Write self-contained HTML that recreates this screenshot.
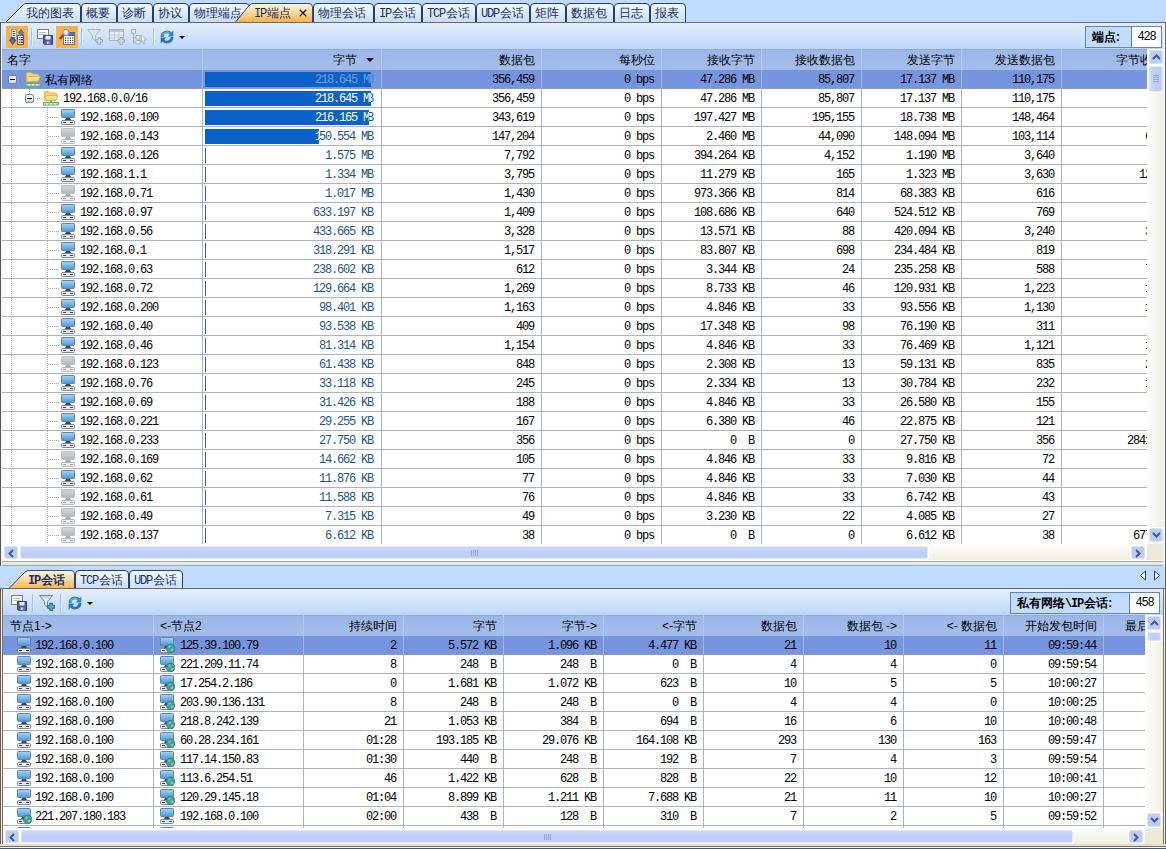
<!DOCTYPE html>
<html lang="zh"><head><meta charset="utf-8"><title>IP端点</title>
<style>
html,body{margin:0;padding:0;background:#bfdbff;}
body{width:1166px;height:849px;overflow:hidden;font-family:"Liberation Sans",sans-serif;font-size:12px;color:#000;}
#app{position:relative;width:1166px;height:849px;overflow:hidden;background:#bfdbff;}
#app div,#app i,#app span,#app svg,#app b{box-sizing:border-box;}
i{font-style:normal;display:block;position:absolute;}
#defs{position:absolute;width:0;height:0;overflow:hidden;}
/* tab bars */
#tabbar{position:absolute;left:0;top:0;width:1166px;height:23px;background:#bfdbff;}
#tabbar2{position:absolute;left:0;top:566px;width:1166px;height:23px;background:#bfdbff;}
.tab{position:absolute;top:3px;height:20px;font-size:12px;color:#14306a;white-space:nowrap;}
.tab .tbg{position:absolute;left:0;top:0;display:block;}
.tab>span{position:absolute;top:3px;line-height:14px;height:14px;letter-spacing:0;}
.tab.b>span{font-weight:bold;}
.tab .tx{right:5px;top:3px;font-size:10px;line-height:14px;color:#111;font-weight:normal;}
#tabbar2 .tab{top:4px;}
.navarr{position:absolute;top:4px;display:block;}
#tabline{position:absolute;left:0;top:22px;width:1166px;height:1px;background:#6a6a6c;}
#tabline2{position:absolute;left:0;top:588px;width:1166px;height:1px;background:#6a6a6c;}
/* toolbars */
.toolbar{position:absolute;left:0;width:1166px;height:26px;background:linear-gradient(#e4eefc 0%,#d3e4fa 45%,#bcd7fb 100%);}
#tb1{top:23px;}
#tb2{top:589px;}
.tbtn{position:absolute;top:3px;width:22px;height:22px;}
.tbtn svg{position:absolute;left:3px;top:3px;display:block;}
.tbtn.on{background:#fbb04f;}
.tsep{position:absolute;top:5px;width:2px;height:18px;border-left:1px solid #adc4e8;border-right:1px solid #e6effc;}
.tdrop{position:absolute;top:13px;width:0;height:0;border-left:3px solid transparent;border-right:3px solid transparent;border-top:3px solid #000;margin-left:1px;}
.counter{position:absolute;top:3px;height:22px;border:1px solid #5f86c4;background:#c2dcff;font-size:12px;line-height:20px;white-space:nowrap;}
.counter b{position:absolute;left:6px;top:0;font-weight:bold;color:#000;}
.counter .cv{position:absolute;right:0;top:0;height:20px;background:#fff;border-left:1px solid #5f86c4;text-align:center;font-family:"Liberation Mono",monospace;letter-spacing:-1.2px;}
/* grids */
.grid{position:absolute;left:0;width:1166px;overflow:hidden;}
#g1{top:49px;height:512px;}
#g2{top:615px;height:230px;width:1163px;}
.ghead{position:absolute;left:0;top:0;width:1166px;height:21px;background:linear-gradient(#9ab6e7,#a5beeb);border-top:1px solid #8fabdc;}
.hc{position:absolute;top:0;height:20px;line-height:20px;font-size:12px;color:#000;white-space:nowrap;overflow:hidden;}
.hc>span{position:absolute;left:7px;top:0;}
.hc.r>span{left:auto;right:6px;}
.hc .sortarr{right:7px;top:8px;width:0;height:0;border-left:4px solid transparent;border-right:4px solid transparent;border-top:4px solid #000;}
.gbody{position:absolute;left:0;top:21px;width:1166px;background:repeating-linear-gradient(to bottom,#fff 0,#fff 18px,#a9b3c2 18px,#a9b3c2 19px);overflow:hidden;}
#g1 .gbody{height:475px;}
#g2 .gbody{height:192px;}
.row{position:absolute;left:0;width:1166px;height:19px;}
.row.sel{background:#7595de;box-shadow:inset 0 -1px 0 #8c9cc0;}
.c{position:absolute;top:0;height:19px;line-height:21px;font-family:"Liberation Mono",monospace;font-size:12px;letter-spacing:-1.2px;white-space:pre;overflow:hidden;}
.c.r{text-align:right;padding-right:7px;}
.c .nm{position:absolute;top:0;line-height:21px;}
.c .nm.cj{font-family:"Liberation Sans",sans-serif;letter-spacing:0;}
.ic{position:absolute;top:1px;display:block;}
.pm{top:5px;width:9px;height:9px;border:1px solid #7c8594;border-radius:2px;background:linear-gradient(#fff,#d4d7dc);}
.pm:after{content:"";position:absolute;left:1px;top:3px;width:5px;height:1px;background:#000;}
.vl{width:1px;background-image:linear-gradient(#a6a6a6 50%,transparent 50%);background-size:1px 2px;}
.hl{top:9px;height:1px;background-image:linear-gradient(90deg,#a6a6a6 50%,transparent 50%);background-size:2px 1px;}
.cb .bt{position:absolute;right:8px;top:0;line-height:21px;color:#1f5585;text-align:right;}
.cb .bar{position:absolute;left:3px;top:2px;height:15px;background:#0a62c9;overflow:hidden;}
.cb .bar.thin{width:1px;background:#2a62a8;}
.cb .bar .bt.w{left:0;right:auto;top:-2px;color:#fff;padding-right:0;}
.row.sel .cb .bt{color:#4d86c8;}
.row.sel .cb .bar .bt.w{color:#6fa0e0;}
.cl{top:0;width:1px;height:496px;background:linear-gradient(#b4c6ea 0,#b4c6ea 21px,#a9b3c4 21px);}
#g2 .cl{height:213px;}
/* scrollbars */
.vsb{position:absolute;background:linear-gradient(90deg,#fdfdfb,#f1efe4);}
.hsb{position:absolute;background:linear-gradient(#fdfdfb,#f1efe4);}
.corner{position:absolute;background:#ece9d8;}
.sbtn{position:absolute;width:14px;height:14px;background:#bccdf0;border:1px solid #d9e4f8;border-radius:2px;box-shadow:0 0 0 1px #fff;}
.vsb .sbtn{left:2px;}
.hsb .sbtn{top:2px;height:13px;}
.sbtn svg{position:absolute;display:block;}
.sbtn.up svg,.sbtn.dn svg{left:2px;top:3px;}
.sbtn.lf svg,.sbtn.rt svg{left:3px;top:2px;}
.vthumb{position:absolute;left:2px;width:14px;background:linear-gradient(90deg,#cad6fa,#bccbf7 60%,#c3d0f9);border:1px solid #dfe8fa;border-radius:2px;box-shadow:0 0 0 1px #fff;}
.vthumb i{left:3px;top:8px;width:6px;height:7px;background-image:linear-gradient(#93aadc 50%,transparent 50%);background-size:6px 2px;}
.hthumb{position:absolute;top:2px;height:13px;background:linear-gradient(#cad6fa,#bccbf7 60%,#c3d0f9);border:1px solid #dfe8fa;border-radius:2px;box-shadow:0 0 0 1px #fff;}
.hthumb i{left:50%;top:3px;width:7px;height:6px;margin-left:-3px;background-image:linear-gradient(90deg,#93aadc 50%,transparent 50%);background-size:2px 6px;}
/* splitter + frames */
#split{position:absolute;left:0;top:560px;width:1166px;height:6px;background:linear-gradient(#fbfbf8 0,#fbfbf8 1px,#a6aeae 1px,#a6aeae 2px,#e9e9dd 2px,#e9e9dd 5px,#96a6ba 5px);}

#frameL1{position:absolute;left:0;top:23px;width:2px;height:543px;background:linear-gradient(90deg,#565a50 0,#565a50 1px,#eef3fb 1px);}
#frameL2{position:absolute;left:0;top:589px;width:3px;height:260px;background:linear-gradient(90deg,#6b5c4c 0,#6b5c4c 1px,#f0ece0 1px,#f0ece0 2px,#7c7066 2px);}
#frameR{position:absolute;left:1163px;top:23px;width:3px;height:543px;background:linear-gradient(90deg,#eef3fb 0,#eef3fb 2px,#6e6660 2px);}
#frameR2{position:absolute;left:1163px;top:589px;width:3px;height:260px;background:linear-gradient(90deg,#7c7670 0,#7c7670 1px,#f0ece0 1px,#f0ece0 2px,#6b5c4c 2px);}
#frameR0{position:absolute;left:1165px;top:566px;width:1px;height:23px;background:#6e6660;}
#frameB{position:absolute;left:0;top:844px;width:1166px;height:5px;background:linear-gradient(#e6dfc4 0,#e6dfc4 2px,#7c6e60 2px,#7c6e60 3px,#f4f4f4 3px,#f4f4f4 4px,#3c5682 4px);}

.m{font-family:"Liberation Mono",monospace;letter-spacing:-1.2px;margin-right:1.2px;}
.hc.sorted>span{right:24px;}
.k{display:inline-block;width:12px;text-align:center;overflow:visible;white-space:nowrap;}
.tab .txs{position:absolute;right:6px;top:6px;display:block;}

</style></head>
<body>
<svg id="defs" width="0" height="0" aria-hidden="true">
<defs>
<linearGradient id="gt" x1="0" y1="0" x2="0" y2="1"><stop offset="0" stop-color="#f4f8fe"/><stop offset="0.5" stop-color="#e0ecfc"/><stop offset="1" stop-color="#c6dcfa"/></linearGradient>
<linearGradient id="ga" x1="0" y1="0" x2="0" y2="1"><stop offset="0" stop-color="#fff3e0"/><stop offset="0.45" stop-color="#ffd9a0"/><stop offset="1" stop-color="#ffb04a"/></linearGradient>
<linearGradient id="gscr" x1="0" y1="0" x2="0" y2="1"><stop offset="0" stop-color="#a6d5f3"/><stop offset="1" stop-color="#4c98dc"/></linearGradient>
<linearGradient id="gscrg" x1="0" y1="0" x2="0" y2="1"><stop offset="0" stop-color="#d4d6d8"/><stop offset="1" stop-color="#b4b7ba"/></linearGradient>
<linearGradient id="gfold" x1="0" y1="0" x2="0" y2="1"><stop offset="0" stop-color="#fff0ae"/><stop offset="1" stop-color="#f8cf5e"/></linearGradient>
<symbol id="i-pc" viewBox="0 0 16 16">
 <rect x="1.5" y="0.5" width="13" height="8" rx="0.8" fill="url(#gscr)" stroke="#5f87ad" stroke-width="1"/>
 <path d="M6 9 H10 L11 11 H5 Z" fill="#3a4a5c"/>
 <rect x="1.5" y="11.5" width="13" height="4" rx="1" fill="#e9ebee" stroke="#7d8793" stroke-width="1"/>
 <rect x="3" y="13" width="3" height="1" fill="#3c4650"/><rect x="10" y="13" width="3" height="1" fill="#3c4650"/>
</symbol>
<symbol id="i-pcg" viewBox="0 0 16 16">
 <rect x="1.5" y="0.5" width="13" height="8" rx="0.8" fill="url(#gscrg)" stroke="#b9bcc0" stroke-width="1"/>
 <path d="M6 9 H10 L11 11 H5 Z" fill="#a7abb0"/>
 <rect x="1.5" y="11.5" width="13" height="4" rx="1" fill="#eeeff1" stroke="#b4b8bd" stroke-width="1"/>
 <rect x="3" y="13" width="3" height="1" fill="#9a9ea4"/><rect x="10" y="13" width="3" height="1" fill="#9a9ea4"/>
</symbol>
<symbol id="i-pcw" viewBox="0 0 16 16">
 <rect x="1.5" y="0.5" width="13" height="8" rx="0.8" fill="url(#gscr)" stroke="#5f87ad" stroke-width="1"/>
 <path d="M6 9 H10 L11 11 H5 Z" fill="#3a4a5c"/>
 <rect x="1.5" y="11.5" width="13" height="4" rx="1" fill="#e9ebee" stroke="#7d8793" stroke-width="1"/>
 <rect x="3" y="13" width="3" height="1" fill="#3c4650"/>
 <circle cx="11.6" cy="11.4" r="4.1" fill="#3f9fa6" stroke="#2b7a80" stroke-width="0.8"/>
 <path d="M8.8 10 Q10.4 8.2 12.4 8.6 Q11.8 10.6 10 11.2 Z M11.6 11.8 Q13.6 11 15 12.4 Q14 14.8 12 14.6 Z" fill="#74c88a"/>
</symbol>
<symbol id="i-net" viewBox="0 0 16 16">
 <path d="M1.5 3 Q1.5 1.5 3 1.5 H6 L7.5 3 H12.5 Q13.5 3 13.5 4 V9.5 H1.5 Z" fill="#f6d272" stroke="#e0b24c" stroke-width="1"/>
 <path d="M3.5 5.5 H15 L12.8 10.5 H1.5 Z" fill="url(#gfold)" stroke="#e6b84e" stroke-width="1"/>
 <rect x="7" y="10.5" width="2" height="2.5" fill="#7fa878"/>
 <rect x="0.5" y="12.5" width="15" height="2.6" fill="#a4dca0" stroke="#62b064" stroke-width="0.9"/>
 <rect x="3" y="13.2" width="2" height="1.3" fill="#eef8ec"/><rect x="7" y="13.2" width="2" height="1.3" fill="#eef8ec"/><rect x="11" y="13.2" width="2" height="1.3" fill="#eef8ec"/>
</symbol>
<symbol id="i-save" viewBox="0 0 16 16">
 <rect x="0.5" y="0.5" width="11" height="9" fill="#fdfdfd" stroke="#7a8088" stroke-width="1"/>
 <rect x="2" y="3" width="7" height="1" fill="#b9bdc3"/><rect x="2" y="5" width="7" height="1" fill="#b9bdc3"/>
 <path d="M6.5 6.5 H15.5 V15.5 H7.5 L6.5 14.5 Z" fill="#4c58a6" stroke="#3a4488" stroke-width="1"/>
 <rect x="8.5" y="7" width="5" height="3.5" fill="#eef0f8"/>
 <rect x="9" y="12" width="4.5" height="3.5" fill="#7c86c6"/><rect x="10" y="12.8" width="1.4" height="2" fill="#f0f0f8"/>
</symbol>
<symbol id="i-sync" viewBox="0 0 16 16">
 <rect x="2.5" y="0.5" width="5" height="10" fill="#fdfdfd" stroke="#9aa1a8" stroke-width="1"/>
 <rect x="3.5" y="2" width="3" height="1" fill="#46734a"/><rect x="3.5" y="4" width="3" height="1" fill="#46734a"/><rect x="3.5" y="6" width="3" height="1" fill="#46734a"/><rect x="3.5" y="8" width="3" height="1" fill="#46734a"/>
 <path d="M2 8 L2 11 L0.5 11 L3.7 15.5 L7 11 L5.5 11 L5.5 9.5 Z" fill="#4c6fc0" stroke="#263f80" stroke-width="0.7"/>
 <path d="M9.5 4.5 L12 0.5 L14.5 4 L13.6 4.2 Q15.3 6.5 14.4 9 L12.6 8.4 Q13 6.4 11.6 4.6 Z" fill="#5a86d0" stroke="#2c4f98" stroke-width="0.7"/>
 <rect x="8.5" y="6.5" width="6" height="9" fill="#fdfdfd" stroke="#6a5a48" stroke-width="1"/>
 <rect x="9.8" y="8" width="1" height="1" fill="#222"/><rect x="11.6" y="8" width="2.2" height="1" fill="#222"/>
 <rect x="9.8" y="10" width="1" height="1.4" fill="#222"/><rect x="11.6" y="10" width="2.2" height="1.4" fill="#222"/>
 <rect x="9.8" y="12.5" width="1" height="1.4" fill="#222"/><rect x="11.6" y="12.5" width="2.2" height="1.4" fill="#222"/>
</symbol>
<symbol id="i-find" viewBox="0 0 16 16">
 <rect x="4.5" y="6.5" width="11" height="9" fill="#fdfdfd" stroke="#6f7680" stroke-width="1"/>
 <rect x="9" y="3.5" width="6.5" height="3" fill="#5673c6" stroke="#4a62ae" stroke-width="1"/>
 <g fill="#30343c"><rect x="6" y="8.5" width="1.2" height="1.2"/><rect x="8.4" y="8.5" width="1.2" height="1.2"/><rect x="10.8" y="8.5" width="1.2" height="1.2"/><rect x="13.2" y="8.5" width="1.2" height="1.2"/>
 <rect x="6" y="10.8" width="1.2" height="1.2"/><rect x="8.4" y="10.8" width="1.2" height="1.2"/><rect x="10.8" y="10.8" width="1.2" height="1.2"/><rect x="13.2" y="10.8" width="1.2" height="1.2"/>
 <rect x="6" y="13.1" width="1.2" height="1.2"/><rect x="8.4" y="13.1" width="1.2" height="1.2"/><rect x="10.8" y="13.1" width="1.2" height="1.2"/><rect x="13.2" y="13.1" width="1.2" height="1.2"/></g>
 <path d="M1.4 9.2 L4.8 5.8" stroke="#7a5230" stroke-width="2.4" stroke-linecap="round"/>
 <circle cx="7" cy="3.4" r="3" fill="#dce9f5" stroke="#8e99a8" stroke-width="1.1"/>
 <path d="M5.2 2.6 A2 2 0 0 1 7.6 1.4" stroke="#fff" stroke-width="0.8" fill="none"/>
</symbol>
<symbol id="i-filter" viewBox="0 0 16 16">
 <path d="M0.5 0.5 H13.5 L8.5 6.5 V12 L5.5 9.5 V6.5 Z" fill="#e4eef8" stroke="#5a86bc" stroke-width="1"/>
 <path d="M2 1.2 H12 L10.6 2.8 H3.4 Z" fill="#b9d2ec"/>
 <path d="M8.6 10.4 H10.8 V8.2 H13.6 V10.4 H15.8 V13.2 H13.6 V15.6 H10.8 V13.2 H8.6 Z" fill="#4fb0c4" stroke="#1c5f78" stroke-width="0.9"/>
</symbol>
<symbol id="i-filter-g" viewBox="0 0 16 16">
 <path d="M0.5 0.5 H13.5 L8.5 6.5 V12 L5.5 9.5 V6.5 Z" fill="#dde4ee" stroke="#a9b5c6" stroke-width="1"/>
 <path d="M9 10.5 H11 V8.5 H13.5 V10.5 H15.5 V13 H13.5 V15.5 H11 V13 H9 Z" fill="#cfd7e2" stroke="#9eabbd" stroke-width="0.9"/>
</symbol>
<symbol id="i-table-g" viewBox="0 0 16 16">
 <rect x="0.5" y="0.5" width="14" height="11" fill="#e9eef6" stroke="#a6b2c4" stroke-width="1"/>
 <rect x="1" y="1" width="13" height="2" fill="#b7c2d3"/>
 <path d="M1 6 H14 M1 9 H14 M5.5 3 V11 M10 3 V11" stroke="#c0cad9" stroke-width="1" fill="none"/>
 <path d="M9 10.5 H11 V8.5 H13.5 V10.5 H15.5 V13 H13.5 V15.5 H11 V13 H9 Z" fill="#cfd7e2" stroke="#9eabbd" stroke-width="0.9"/>
</symbol>
<symbol id="i-tree-g" viewBox="0 0 16 16">
 <rect x="0.5" y="0.5" width="4" height="3.5" fill="#eef2f8" stroke="#a6b2c4" stroke-width="1"/>
 <path d="M2.5 4 V13.5 H5 M2.5 8.5 H5" stroke="#a6b2c4" stroke-width="1" fill="none"/>
 <rect x="5" y="6.5" width="4" height="3.5" fill="#eef2f8" stroke="#a6b2c4" stroke-width="1"/>
 <rect x="5" y="11.5" width="4" height="3.5" fill="#eef2f8" stroke="#a6b2c4" stroke-width="1"/>
 <path d="M10.5 6 L15.5 11 H13 L14 14.5 L12.8 15 L11.8 11.8 L10.5 13 Z" fill="#eef2f8" stroke="#a6b2c4" stroke-width="0.9"/>
</symbol>
<symbol id="i-refresh" viewBox="0 0 16 16">
 <path d="M3 8 A5 5 0 0 1 11.8 4.7" fill="none" stroke="#2c86c8" stroke-width="2.8"/>
 <path d="M14.3 1.6 V7.6 H8.6 Z" fill="#2c86c8"/>
 <path d="M13 8 A5 5 0 0 1 4.2 11.3" fill="none" stroke="#2577b8" stroke-width="2.8"/>
 <path d="M1.7 14.4 V8.4 H7.4 Z" fill="#2577b8"/>
 <path d="M3.6 6.6 A4.6 4.6 0 0 1 10.6 3.9" fill="none" stroke="#7cc4ee" stroke-width="0.9"/>
</symbol>
</defs>
</svg>
<div id="app">
<div id="tabbar">
<div class="tab tfirst" style="left:5px;width:76px"><svg class="tbg" width="76" height="20" viewBox="0 0 76 20"><path d="M0.5 19.5 L18.5 1.5 Q19.5 0.5 21 0.5 H72 Q75.5 0.5 75.5 4 V19.5" fill="url(#gt)" stroke="#1e3f85" stroke-width="1"/></svg><span style="left:21px"><span class="k">我</span><span class="k">的</span><span class="k">图</span><span class="k">表</span></span></div>
<div class="tab" style="left:81px;width:36px"><svg class="tbg" width="36" height="20" viewBox="0 0 36 20"><path d="M0.5 19.5 V4 Q0.5 0.5 4 0.5 H32 Q35.5 0.5 35.5 4 V19.5" fill="url(#gt)" stroke="#1e3f85" stroke-width="1"/></svg><span style="left:5px"><span class="k">概</span><span class="k">要</span></span></div>
<div class="tab" style="left:117px;width:36px"><svg class="tbg" width="36" height="20" viewBox="0 0 36 20"><path d="M0.5 19.5 V4 Q0.5 0.5 4 0.5 H32 Q35.5 0.5 35.5 4 V19.5" fill="url(#gt)" stroke="#1e3f85" stroke-width="1"/></svg><span style="left:5px"><span class="k">诊</span><span class="k">断</span></span></div>
<div class="tab" style="left:153px;width:36px"><svg class="tbg" width="36" height="20" viewBox="0 0 36 20"><path d="M0.5 19.5 V4 Q0.5 0.5 4 0.5 H32 Q35.5 0.5 35.5 4 V19.5" fill="url(#gt)" stroke="#1e3f85" stroke-width="1"/></svg><span style="left:5px"><span class="k">协</span><span class="k">议</span></span></div>
<div class="tab" style="left:189px;width:61px"><svg class="tbg" width="61" height="20" viewBox="0 0 61 20"><path d="M0.5 19.5 V4 Q0.5 0.5 4 0.5 H57 Q60.5 0.5 60.5 4 V19.5" fill="url(#gt)" stroke="#1e3f85" stroke-width="1"/></svg><span style="left:5px"><span class="k">物</span><span class="k">理</span><span class="k">端</span><span class="k">点</span></span></div>
<div class="tab tactive" style="left:235px;width:78px"><svg class="tbg" width="78" height="20" viewBox="0 0 78 20"><path d="M0 19.5 L14.5 2 Q16 0.5 18 0.5 H74 Q77.5 0.5 77.5 4 V19.5 Z" fill="url(#ga)" stroke="none"/><path d="M0.5 19 L14.5 2 Q16 0.5 18 0.5 H74 Q77.5 0.5 77.5 4 V19.5" fill="none" stroke="#2a4a8c" stroke-width="1"/></svg><span style="left:19px"><span class=m>IP</span><span class="k">端</span><span class="k">点</span></span><svg class="txs" width="8" height="8" viewBox="0 0 8 8"><path d="M0.8 0.8 L7.2 7.2 M7.2 0.8 L0.8 7.2" stroke="#1a1a1a" stroke-width="1.3" fill="none"/></svg></div>
<div class="tab" style="left:313px;width:61px"><svg class="tbg" width="61" height="20" viewBox="0 0 61 20"><path d="M0.5 19.5 V4 Q0.5 0.5 4 0.5 H57 Q60.5 0.5 60.5 4 V19.5" fill="url(#gt)" stroke="#1e3f85" stroke-width="1"/></svg><span style="left:5px"><span class="k">物</span><span class="k">理</span><span class="k">会</span><span class="k">话</span></span></div>
<div class="tab" style="left:374px;width:48px"><svg class="tbg" width="48" height="20" viewBox="0 0 48 20"><path d="M0.5 19.5 V4 Q0.5 0.5 4 0.5 H44 Q47.5 0.5 47.5 4 V19.5" fill="url(#gt)" stroke="#1e3f85" stroke-width="1"/></svg><span style="left:5px"><span class=m>IP</span><span class="k">会</span><span class="k">话</span></span></div>
<div class="tab" style="left:422px;width:54px"><svg class="tbg" width="54" height="20" viewBox="0 0 54 20"><path d="M0.5 19.5 V4 Q0.5 0.5 4 0.5 H50 Q53.5 0.5 53.5 4 V19.5" fill="url(#gt)" stroke="#1e3f85" stroke-width="1"/></svg><span style="left:5px"><span class=m>TCP</span><span class="k">会</span><span class="k">话</span></span></div>
<div class="tab" style="left:476px;width:54px"><svg class="tbg" width="54" height="20" viewBox="0 0 54 20"><path d="M0.5 19.5 V4 Q0.5 0.5 4 0.5 H50 Q53.5 0.5 53.5 4 V19.5" fill="url(#gt)" stroke="#1e3f85" stroke-width="1"/></svg><span style="left:5px"><span class=m>UDP</span><span class="k">会</span><span class="k">话</span></span></div>
<div class="tab" style="left:530px;width:36px"><svg class="tbg" width="36" height="20" viewBox="0 0 36 20"><path d="M0.5 19.5 V4 Q0.5 0.5 4 0.5 H32 Q35.5 0.5 35.5 4 V19.5" fill="url(#gt)" stroke="#1e3f85" stroke-width="1"/></svg><span style="left:5px"><span class="k">矩</span><span class="k">阵</span></span></div>
<div class="tab" style="left:566px;width:48px"><svg class="tbg" width="48" height="20" viewBox="0 0 48 20"><path d="M0.5 19.5 V4 Q0.5 0.5 4 0.5 H44 Q47.5 0.5 47.5 4 V19.5" fill="url(#gt)" stroke="#1e3f85" stroke-width="1"/></svg><span style="left:5px"><span class="k">数</span><span class="k">据</span><span class="k">包</span></span></div>
<div class="tab" style="left:614px;width:36px"><svg class="tbg" width="36" height="20" viewBox="0 0 36 20"><path d="M0.5 19.5 V4 Q0.5 0.5 4 0.5 H32 Q35.5 0.5 35.5 4 V19.5" fill="url(#gt)" stroke="#1e3f85" stroke-width="1"/></svg><span style="left:5px"><span class="k">日</span><span class="k">志</span></span></div>
<div class="tab" style="left:650px;width:36px"><svg class="tbg" width="36" height="20" viewBox="0 0 36 20"><path d="M0.5 19.5 V4 Q0.5 0.5 4 0.5 H32 Q35.5 0.5 35.5 4 V19.5" fill="url(#gt)" stroke="#1e3f85" stroke-width="1"/></svg><span style="left:5px"><span class="k">报</span><span class="k">表</span></span></div>
</div>
<div id="tabline"></div>
<div id="tb1" class="toolbar">
<div class="tbtn on" style="left:6px"><svg width="16" height="16" viewBox="0 0 16 16"><use href="#i-sync"/></svg></div>
<div class="tsep" style="left:31px"></div>
<div class="tbtn" style="left:34px"><svg width="16" height="16" viewBox="0 0 16 16"><use href="#i-save"/></svg></div>
<div class="tbtn on" style="left:56px"><svg width="16" height="16" viewBox="0 0 16 16"><use href="#i-find"/></svg></div>
<div class="tsep" style="left:81px"></div>
<div class="tbtn dis" style="left:84px"><svg width="16" height="16" viewBox="0 0 16 16"><use href="#i-filter-g"/></svg></div>
<div class="tbtn dis" style="left:106px"><svg width="16" height="16" viewBox="0 0 16 16"><use href="#i-table-g"/></svg></div>
<div class="tbtn dis" style="left:128px"><svg width="16" height="16" viewBox="0 0 16 16"><use href="#i-tree-g"/></svg></div>
<div class="tsep" style="left:153px"></div>
<div class="tbtn" style="left:156px"><svg width="16" height="16" viewBox="0 0 16 16"><use href="#i-refresh"/></svg></div>
<div class="tdrop" style="left:178px"></div>
<div class="counter" style="left:1085px;width:77px"><b><span class="k">端</span><span class="k">点</span>:</b><span class="cv" style="width:30px">428</span></div>
</div>
<div id="g1" class="grid">
<div class="ghead">
<div class="hc" style="left:0px;width:202px"><span><span class="k">名</span><span class="k">字</span></span></div>
<div class="hc r sorted" style="left:202px;width:179px"><span><span class="k">字</span><span class="k">节</span></span><i class="sortarr"></i></div>
<div class="hc r" style="left:381px;width:160px"><span><span class="k">数</span><span class="k">据</span><span class="k">包</span></span></div>
<div class="hc r" style="left:541px;width:120px"><span><span class="k">每</span><span class="k">秒</span><span class="k">位</span></span></div>
<div class="hc r" style="left:661px;width:100px"><span><span class="k">接</span><span class="k">收</span><span class="k">字</span><span class="k">节</span></span></div>
<div class="hc r" style="left:761px;width:100px"><span><span class="k">接</span><span class="k">收</span><span class="k">数</span><span class="k">据</span><span class="k">包</span></span></div>
<div class="hc r" style="left:861px;width:100px"><span><span class="k">发</span><span class="k">送</span><span class="k">字</span><span class="k">节</span></span></div>
<div class="hc r" style="left:961px;width:100px"><span><span class="k">发</span><span class="k">送</span><span class="k">数</span><span class="k">据</span><span class="k">包</span></span></div>
<div class="hc" style="left:1061px;width:100px"><span style="left:55px"><span class="k">字</span><span class="k">节</span><span class="k">收</span><span class="k">发</span></span></div>
</div>
<div class="gbody">
<div class="row sel" style="top:0px"><div class="c c0" style="left:0;width:202px"><i class="pm" style="left:8px"></i><svg class="ic" style="left:25px" width="16" height="16" viewBox="0 0 16 16"><use href="#i-net"/></svg><span class="nm cj" style="left:45px"><span class="k">私</span><span class="k">有</span><span class="k">网</span><span class="k">络</span></span></div><div class="c cb" style="left:202px;width:179px"><span class="bt">218.645 MB</span><div class="bar" style="width:166px"><span class="bt w" style="width:170px">218.645 MB</span></div></div><div class="c r" style="left:381px;width:160px">356,459</div><div class="c r" style="left:541px;width:120px">0 bps</div><div class="c r" style="left:661px;width:100px">47.286 MB</div><div class="c r" style="left:761px;width:100px">85,807</div><div class="c r" style="left:861px;width:100px">17.137 MB</div><div class="c r" style="left:961px;width:100px">110,175</div></div>
<div class="row" style="top:19px"><div class="c c0" style="left:0;width:202px"><i class="vl" style="left:11px;top:0;height:19px"></i><i class="hl" style="left:35px;width:8px"></i><i class="vl" style="left:29px;top:0;height:5px"></i><i class="pm" style="left:25px"></i><svg class="ic" style="left:43px" width="16" height="16" viewBox="0 0 16 16"><use href="#i-net"/></svg><span class="nm" style="left:63px">192.168.0.0/16</span></div><div class="c cb" style="left:202px;width:179px"><span class="bt">218.645 MB</span><div class="bar" style="width:166px"><span class="bt w" style="width:170px">218.645 MB</span></div></div><div class="c r" style="left:381px;width:160px">356,459</div><div class="c r" style="left:541px;width:120px">0 bps</div><div class="c r" style="left:661px;width:100px">47.286 MB</div><div class="c r" style="left:761px;width:100px">85,807</div><div class="c r" style="left:861px;width:100px">17.137 MB</div><div class="c r" style="left:961px;width:100px">110,175</div></div>
<div class="row" style="top:38px"><div class="c c0" style="left:0;width:202px"><i class="vl" style="left:11px;top:0;height:19px"></i><i class="vl" style="left:47px;top:0;height:19px"></i><i class="hl" style="left:48px;width:12px"></i><svg class="ic" style="left:60px" width="16" height="16" viewBox="0 0 16 16"><use href="#i-pc"/></svg><span class="nm" style="left:80px">192.168.0.100</span></div><div class="c cb" style="left:202px;width:179px"><span class="bt">216.165 MB</span><div class="bar" style="width:164px"><span class="bt w" style="width:170px">216.165 MB</span></div></div><div class="c r" style="left:381px;width:160px">343,619</div><div class="c r" style="left:541px;width:120px">0 bps</div><div class="c r" style="left:661px;width:100px">197.427 MB</div><div class="c r" style="left:761px;width:100px">195,155</div><div class="c r" style="left:861px;width:100px">18.738 MB</div><div class="c r" style="left:961px;width:100px">148,464</div></div>
<div class="row" style="top:57px"><div class="c c0" style="left:0;width:202px"><i class="vl" style="left:11px;top:0;height:19px"></i><i class="vl" style="left:47px;top:0;height:19px"></i><i class="hl" style="left:48px;width:12px"></i><svg class="ic" style="left:60px" width="16" height="16" viewBox="0 0 16 16"><use href="#i-pcg"/></svg><span class="nm" style="left:80px">192.168.0.143</span></div><div class="c cb" style="left:202px;width:179px"><span class="bt">150.554 MB</span><div class="bar" style="width:114px"><span class="bt w" style="width:170px">150.554 MB</span></div></div><div class="c r" style="left:381px;width:160px">147,204</div><div class="c r" style="left:541px;width:120px">0 bps</div><div class="c r" style="left:661px;width:100px">2.460 MB</div><div class="c r" style="left:761px;width:100px">44,090</div><div class="c r" style="left:861px;width:100px">148.094 MB</div><div class="c r" style="left:961px;width:100px">103,114</div><div class="c" style="left:1062px;width:100px"><span class="nm" style="left:83px">60.1</span></div></div>
<div class="row" style="top:76px"><div class="c c0" style="left:0;width:202px"><i class="vl" style="left:11px;top:0;height:19px"></i><i class="vl" style="left:47px;top:0;height:19px"></i><i class="hl" style="left:48px;width:12px"></i><svg class="ic" style="left:60px" width="16" height="16" viewBox="0 0 16 16"><use href="#i-pc"/></svg><span class="nm" style="left:80px">192.168.0.126</span></div><div class="c cb" style="left:202px;width:179px"><span class="bt">1.575 MB</span><div class="bar thin"></div></div><div class="c r" style="left:381px;width:160px">7,792</div><div class="c r" style="left:541px;width:120px">0 bps</div><div class="c r" style="left:661px;width:100px">394.264 KB</div><div class="c r" style="left:761px;width:100px">4,152</div><div class="c r" style="left:861px;width:100px">1.190 MB</div><div class="c r" style="left:961px;width:100px">3,640</div></div>
<div class="row" style="top:95px"><div class="c c0" style="left:0;width:202px"><i class="vl" style="left:11px;top:0;height:19px"></i><i class="vl" style="left:47px;top:0;height:19px"></i><i class="hl" style="left:48px;width:12px"></i><svg class="ic" style="left:60px" width="16" height="16" viewBox="0 0 16 16"><use href="#i-pc"/></svg><span class="nm" style="left:80px">192.168.1.1</span></div><div class="c cb" style="left:202px;width:179px"><span class="bt">1.334 MB</span><div class="bar thin"></div></div><div class="c r" style="left:381px;width:160px">3,795</div><div class="c r" style="left:541px;width:120px">0 bps</div><div class="c r" style="left:661px;width:100px">11.279 KB</div><div class="c r" style="left:761px;width:100px">165</div><div class="c r" style="left:861px;width:100px">1.323 MB</div><div class="c r" style="left:961px;width:100px">3,630</div><div class="c" style="left:1062px;width:100px"><span class="nm" style="left:77px">12.5</span></div></div>
<div class="row" style="top:114px"><div class="c c0" style="left:0;width:202px"><i class="vl" style="left:11px;top:0;height:19px"></i><i class="vl" style="left:47px;top:0;height:19px"></i><i class="hl" style="left:48px;width:12px"></i><svg class="ic" style="left:60px" width="16" height="16" viewBox="0 0 16 16"><use href="#i-pcg"/></svg><span class="nm" style="left:80px">192.168.0.71</span></div><div class="c cb" style="left:202px;width:179px"><span class="bt">1.017 MB</span><div class="bar thin"></div></div><div class="c r" style="left:381px;width:160px">1,430</div><div class="c r" style="left:541px;width:120px">0 bps</div><div class="c r" style="left:661px;width:100px">973.366 KB</div><div class="c r" style="left:761px;width:100px">814</div><div class="c r" style="left:861px;width:100px">68.383 KB</div><div class="c r" style="left:961px;width:100px">616</div></div>
<div class="row" style="top:133px"><div class="c c0" style="left:0;width:202px"><i class="vl" style="left:11px;top:0;height:19px"></i><i class="vl" style="left:47px;top:0;height:19px"></i><i class="hl" style="left:48px;width:12px"></i><svg class="ic" style="left:60px" width="16" height="16" viewBox="0 0 16 16"><use href="#i-pc"/></svg><span class="nm" style="left:80px">192.168.0.97</span></div><div class="c cb" style="left:202px;width:179px"><span class="bt">633.197 KB</span><div class="bar thin"></div></div><div class="c r" style="left:381px;width:160px">1,409</div><div class="c r" style="left:541px;width:120px">0 bps</div><div class="c r" style="left:661px;width:100px">108.686 KB</div><div class="c r" style="left:761px;width:100px">640</div><div class="c r" style="left:861px;width:100px">524.512 KB</div><div class="c r" style="left:961px;width:100px">769</div></div>
<div class="row" style="top:152px"><div class="c c0" style="left:0;width:202px"><i class="vl" style="left:11px;top:0;height:19px"></i><i class="vl" style="left:47px;top:0;height:19px"></i><i class="hl" style="left:48px;width:12px"></i><svg class="ic" style="left:60px" width="16" height="16" viewBox="0 0 16 16"><use href="#i-pc"/></svg><span class="nm" style="left:80px">192.168.0.56</span></div><div class="c cb" style="left:202px;width:179px"><span class="bt">433.665 KB</span><div class="bar thin"></div></div><div class="c r" style="left:381px;width:160px">3,328</div><div class="c r" style="left:541px;width:120px">0 bps</div><div class="c r" style="left:661px;width:100px">13.571 KB</div><div class="c r" style="left:761px;width:100px">88</div><div class="c r" style="left:861px;width:100px">420.094 KB</div><div class="c r" style="left:961px;width:100px">3,240</div><div class="c" style="left:1062px;width:100px"><span class="nm" style="left:83px">36.8</span></div></div>
<div class="row" style="top:171px"><div class="c c0" style="left:0;width:202px"><i class="vl" style="left:11px;top:0;height:19px"></i><i class="vl" style="left:47px;top:0;height:19px"></i><i class="hl" style="left:48px;width:12px"></i><svg class="ic" style="left:60px" width="16" height="16" viewBox="0 0 16 16"><use href="#i-pc"/></svg><span class="nm" style="left:80px">192.168.0.1</span></div><div class="c cb" style="left:202px;width:179px"><span class="bt">318.291 KB</span><div class="bar thin"></div></div><div class="c r" style="left:381px;width:160px">1,517</div><div class="c r" style="left:541px;width:120px">0 bps</div><div class="c r" style="left:661px;width:100px">83.807 KB</div><div class="c r" style="left:761px;width:100px">698</div><div class="c r" style="left:861px;width:100px">234.484 KB</div><div class="c r" style="left:961px;width:100px">819</div></div>
<div class="row" style="top:190px"><div class="c c0" style="left:0;width:202px"><i class="vl" style="left:11px;top:0;height:19px"></i><i class="vl" style="left:47px;top:0;height:19px"></i><i class="hl" style="left:48px;width:12px"></i><svg class="ic" style="left:60px" width="16" height="16" viewBox="0 0 16 16"><use href="#i-pc"/></svg><span class="nm" style="left:80px">192.168.0.63</span></div><div class="c cb" style="left:202px;width:179px"><span class="bt">238.602 KB</span><div class="bar thin"></div></div><div class="c r" style="left:381px;width:160px">612</div><div class="c r" style="left:541px;width:120px">0 bps</div><div class="c r" style="left:661px;width:100px">3.344 KB</div><div class="c r" style="left:761px;width:100px">24</div><div class="c r" style="left:861px;width:100px">235.258 KB</div><div class="c r" style="left:961px;width:100px">588</div><div class="c" style="left:1062px;width:100px"><span class="nm" style="left:83px">70.3</span></div></div>
<div class="row" style="top:209px"><div class="c c0" style="left:0;width:202px"><i class="vl" style="left:11px;top:0;height:19px"></i><i class="vl" style="left:47px;top:0;height:19px"></i><i class="hl" style="left:48px;width:12px"></i><svg class="ic" style="left:60px" width="16" height="16" viewBox="0 0 16 16"><use href="#i-pc"/></svg><span class="nm" style="left:80px">192.168.0.72</span></div><div class="c cb" style="left:202px;width:179px"><span class="bt">129.664 KB</span><div class="bar thin"></div></div><div class="c r" style="left:381px;width:160px">1,269</div><div class="c r" style="left:541px;width:120px">0 bps</div><div class="c r" style="left:661px;width:100px">8.733 KB</div><div class="c r" style="left:761px;width:100px">46</div><div class="c r" style="left:861px;width:100px">120.931 KB</div><div class="c r" style="left:961px;width:100px">1,223</div><div class="c" style="left:1062px;width:100px"><span class="nm" style="left:83px">13.8</span></div></div>
<div class="row" style="top:228px"><div class="c c0" style="left:0;width:202px"><i class="vl" style="left:11px;top:0;height:19px"></i><i class="vl" style="left:47px;top:0;height:19px"></i><i class="hl" style="left:48px;width:12px"></i><svg class="ic" style="left:60px" width="16" height="16" viewBox="0 0 16 16"><use href="#i-pc"/></svg><span class="nm" style="left:80px">192.168.0.200</span></div><div class="c cb" style="left:202px;width:179px"><span class="bt">98.401 KB</span><div class="bar thin"></div></div><div class="c r" style="left:381px;width:160px">1,163</div><div class="c r" style="left:541px;width:120px">0 bps</div><div class="c r" style="left:661px;width:100px">4.846 KB</div><div class="c r" style="left:761px;width:100px">33</div><div class="c r" style="left:861px;width:100px">93.556 KB</div><div class="c r" style="left:961px;width:100px">1,130</div><div class="c" style="left:1062px;width:100px"><span class="nm" style="left:83px">19.3</span></div></div>
<div class="row" style="top:247px"><div class="c c0" style="left:0;width:202px"><i class="vl" style="left:11px;top:0;height:19px"></i><i class="vl" style="left:47px;top:0;height:19px"></i><i class="hl" style="left:48px;width:12px"></i><svg class="ic" style="left:60px" width="16" height="16" viewBox="0 0 16 16"><use href="#i-pc"/></svg><span class="nm" style="left:80px">192.168.0.40</span></div><div class="c cb" style="left:202px;width:179px"><span class="bt">93.538 KB</span><div class="bar thin"></div></div><div class="c r" style="left:381px;width:160px">409</div><div class="c r" style="left:541px;width:120px">0 bps</div><div class="c r" style="left:661px;width:100px">17.348 KB</div><div class="c r" style="left:761px;width:100px">98</div><div class="c r" style="left:861px;width:100px">76.190 KB</div><div class="c r" style="left:961px;width:100px">311</div></div>
<div class="row" style="top:266px"><div class="c c0" style="left:0;width:202px"><i class="vl" style="left:11px;top:0;height:19px"></i><i class="vl" style="left:47px;top:0;height:19px"></i><i class="hl" style="left:48px;width:12px"></i><svg class="ic" style="left:60px" width="16" height="16" viewBox="0 0 16 16"><use href="#i-pc"/></svg><span class="nm" style="left:80px">192.168.0.46</span></div><div class="c cb" style="left:202px;width:179px"><span class="bt">81.314 KB</span><div class="bar thin"></div></div><div class="c r" style="left:381px;width:160px">1,154</div><div class="c r" style="left:541px;width:120px">0 bps</div><div class="c r" style="left:661px;width:100px">4.846 KB</div><div class="c r" style="left:761px;width:100px">33</div><div class="c r" style="left:861px;width:100px">76.469 KB</div><div class="c r" style="left:961px;width:100px">1,121</div><div class="c" style="left:1062px;width:100px"><span class="nm" style="left:83px">15.7</span></div></div>
<div class="row" style="top:285px"><div class="c c0" style="left:0;width:202px"><i class="vl" style="left:11px;top:0;height:19px"></i><i class="vl" style="left:47px;top:0;height:19px"></i><i class="hl" style="left:48px;width:12px"></i><svg class="ic" style="left:60px" width="16" height="16" viewBox="0 0 16 16"><use href="#i-pcg"/></svg><span class="nm" style="left:80px">192.168.0.123</span></div><div class="c cb" style="left:202px;width:179px"><span class="bt">61.438 KB</span><div class="bar thin"></div></div><div class="c r" style="left:381px;width:160px">848</div><div class="c r" style="left:541px;width:120px">0 bps</div><div class="c r" style="left:661px;width:100px">2.308 KB</div><div class="c r" style="left:761px;width:100px">13</div><div class="c r" style="left:861px;width:100px">59.131 KB</div><div class="c r" style="left:961px;width:100px">835</div><div class="c" style="left:1062px;width:100px"><span class="nm" style="left:83px">25.6</span></div></div>
<div class="row" style="top:304px"><div class="c c0" style="left:0;width:202px"><i class="vl" style="left:11px;top:0;height:19px"></i><i class="vl" style="left:47px;top:0;height:19px"></i><i class="hl" style="left:48px;width:12px"></i><svg class="ic" style="left:60px" width="16" height="16" viewBox="0 0 16 16"><use href="#i-pc"/></svg><span class="nm" style="left:80px">192.168.0.76</span></div><div class="c cb" style="left:202px;width:179px"><span class="bt">33.118 KB</span><div class="bar thin"></div></div><div class="c r" style="left:381px;width:160px">245</div><div class="c r" style="left:541px;width:120px">0 bps</div><div class="c r" style="left:661px;width:100px">2.334 KB</div><div class="c r" style="left:761px;width:100px">13</div><div class="c r" style="left:861px;width:100px">30.784 KB</div><div class="c r" style="left:961px;width:100px">232</div><div class="c" style="left:1062px;width:100px"><span class="nm" style="left:83px">13.1</span></div></div>
<div class="row" style="top:323px"><div class="c c0" style="left:0;width:202px"><i class="vl" style="left:11px;top:0;height:19px"></i><i class="vl" style="left:47px;top:0;height:19px"></i><i class="hl" style="left:48px;width:12px"></i><svg class="ic" style="left:60px" width="16" height="16" viewBox="0 0 16 16"><use href="#i-pc"/></svg><span class="nm" style="left:80px">192.168.0.69</span></div><div class="c cb" style="left:202px;width:179px"><span class="bt">31.426 KB</span><div class="bar thin"></div></div><div class="c r" style="left:381px;width:160px">188</div><div class="c r" style="left:541px;width:120px">0 bps</div><div class="c r" style="left:661px;width:100px">4.846 KB</div><div class="c r" style="left:761px;width:100px">33</div><div class="c r" style="left:861px;width:100px">26.580 KB</div><div class="c r" style="left:961px;width:100px">155</div></div>
<div class="row" style="top:342px"><div class="c c0" style="left:0;width:202px"><i class="vl" style="left:11px;top:0;height:19px"></i><i class="vl" style="left:47px;top:0;height:19px"></i><i class="hl" style="left:48px;width:12px"></i><svg class="ic" style="left:60px" width="16" height="16" viewBox="0 0 16 16"><use href="#i-pc"/></svg><span class="nm" style="left:80px">192.168.0.221</span></div><div class="c cb" style="left:202px;width:179px"><span class="bt">29.255 KB</span><div class="bar thin"></div></div><div class="c r" style="left:381px;width:160px">167</div><div class="c r" style="left:541px;width:120px">0 bps</div><div class="c r" style="left:661px;width:100px">6.380 KB</div><div class="c r" style="left:761px;width:100px">46</div><div class="c r" style="left:861px;width:100px">22.875 KB</div><div class="c r" style="left:961px;width:100px">121</div></div>
<div class="row" style="top:361px"><div class="c c0" style="left:0;width:202px"><i class="vl" style="left:11px;top:0;height:19px"></i><i class="vl" style="left:47px;top:0;height:19px"></i><i class="hl" style="left:48px;width:12px"></i><svg class="ic" style="left:60px" width="16" height="16" viewBox="0 0 16 16"><use href="#i-pc"/></svg><span class="nm" style="left:80px">192.168.0.233</span></div><div class="c cb" style="left:202px;width:179px"><span class="bt">27.750 KB</span><div class="bar thin"></div></div><div class="c r" style="left:381px;width:160px">356</div><div class="c r" style="left:541px;width:120px">0 bps</div><div class="c r" style="left:661px;width:100px">0  B</div><div class="c r" style="left:761px;width:100px">0</div><div class="c r" style="left:861px;width:100px">27.750 KB</div><div class="c r" style="left:961px;width:100px">356</div><div class="c" style="left:1062px;width:100px"><span class="nm" style="left:65px">2841.0</span></div></div>
<div class="row" style="top:380px"><div class="c c0" style="left:0;width:202px"><i class="vl" style="left:11px;top:0;height:19px"></i><i class="vl" style="left:47px;top:0;height:19px"></i><i class="hl" style="left:48px;width:12px"></i><svg class="ic" style="left:60px" width="16" height="16" viewBox="0 0 16 16"><use href="#i-pcg"/></svg><span class="nm" style="left:80px">192.168.0.169</span></div><div class="c cb" style="left:202px;width:179px"><span class="bt">14.662 KB</span><div class="bar thin"></div></div><div class="c r" style="left:381px;width:160px">105</div><div class="c r" style="left:541px;width:120px">0 bps</div><div class="c r" style="left:661px;width:100px">4.846 KB</div><div class="c r" style="left:761px;width:100px">33</div><div class="c r" style="left:861px;width:100px">9.816 KB</div><div class="c r" style="left:961px;width:100px">72</div></div>
<div class="row" style="top:399px"><div class="c c0" style="left:0;width:202px"><i class="vl" style="left:11px;top:0;height:19px"></i><i class="vl" style="left:47px;top:0;height:19px"></i><i class="hl" style="left:48px;width:12px"></i><svg class="ic" style="left:60px" width="16" height="16" viewBox="0 0 16 16"><use href="#i-pc"/></svg><span class="nm" style="left:80px">192.168.0.62</span></div><div class="c cb" style="left:202px;width:179px"><span class="bt">11.876 KB</span><div class="bar thin"></div></div><div class="c r" style="left:381px;width:160px">77</div><div class="c r" style="left:541px;width:120px">0 bps</div><div class="c r" style="left:661px;width:100px">4.846 KB</div><div class="c r" style="left:761px;width:100px">33</div><div class="c r" style="left:861px;width:100px">7.030 KB</div><div class="c r" style="left:961px;width:100px">44</div></div>
<div class="row" style="top:418px"><div class="c c0" style="left:0;width:202px"><i class="vl" style="left:11px;top:0;height:19px"></i><i class="vl" style="left:47px;top:0;height:19px"></i><i class="hl" style="left:48px;width:12px"></i><svg class="ic" style="left:60px" width="16" height="16" viewBox="0 0 16 16"><use href="#i-pcg"/></svg><span class="nm" style="left:80px">192.168.0.61</span></div><div class="c cb" style="left:202px;width:179px"><span class="bt">11.588 KB</span><div class="bar thin"></div></div><div class="c r" style="left:381px;width:160px">76</div><div class="c r" style="left:541px;width:120px">0 bps</div><div class="c r" style="left:661px;width:100px">4.846 KB</div><div class="c r" style="left:761px;width:100px">33</div><div class="c r" style="left:861px;width:100px">6.742 KB</div><div class="c r" style="left:961px;width:100px">43</div></div>
<div class="row" style="top:437px"><div class="c c0" style="left:0;width:202px"><i class="vl" style="left:11px;top:0;height:19px"></i><i class="vl" style="left:47px;top:0;height:19px"></i><i class="hl" style="left:48px;width:12px"></i><svg class="ic" style="left:60px" width="16" height="16" viewBox="0 0 16 16"><use href="#i-pcg"/></svg><span class="nm" style="left:80px">192.168.0.49</span></div><div class="c cb" style="left:202px;width:179px"><span class="bt">7.315 KB</span><div class="bar thin"></div></div><div class="c r" style="left:381px;width:160px">49</div><div class="c r" style="left:541px;width:120px">0 bps</div><div class="c r" style="left:661px;width:100px">3.230 KB</div><div class="c r" style="left:761px;width:100px">22</div><div class="c r" style="left:861px;width:100px">4.085 KB</div><div class="c r" style="left:961px;width:100px">27</div></div>
<div class="row" style="top:456px"><div class="c c0" style="left:0;width:202px"><i class="vl" style="left:11px;top:0;height:19px"></i><i class="vl" style="left:47px;top:0;height:19px"></i><i class="hl" style="left:48px;width:12px"></i><svg class="ic" style="left:60px" width="16" height="16" viewBox="0 0 16 16"><use href="#i-pcg"/></svg><span class="nm" style="left:80px">192.168.0.137</span></div><div class="c cb" style="left:202px;width:179px"><span class="bt">6.612 KB</span><div class="bar thin"></div></div><div class="c r" style="left:381px;width:160px">38</div><div class="c r" style="left:541px;width:120px">0 bps</div><div class="c r" style="left:661px;width:100px">0  B</div><div class="c r" style="left:761px;width:100px">0</div><div class="c r" style="left:861px;width:100px">6.612 KB</div><div class="c r" style="left:961px;width:100px">38</div><div class="c" style="left:1062px;width:100px"><span class="nm" style="left:71px">677.0</span></div></div>
</div>
<i class="cl" style="left:202px"></i><i class="cl" style="left:381px"></i><i class="cl" style="left:541px"></i><i class="cl" style="left:661px"></i><i class="cl" style="left:761px"></i><i class="cl" style="left:861px"></i><i class="cl" style="left:961px"></i><i class="cl" style="left:1061px"></i>
<div class="vsb" style="left:1147px;top:0;width:16px;height:495px"><div class="sbtn up" style="top:1px"><svg width="9" height="6" viewBox="0 0 9 6"><path d="M1 5 L4.5 1.5 L8 5" fill="none" stroke="#3e5a9a" stroke-width="2"/></svg></div><div class="vthumb" style="top:17px;height:26px"><i></i></div><div class="sbtn dn" style="bottom:2px"><svg width="9" height="6" viewBox="0 0 9 6"><path d="M1 1 L4.5 4.5 L8 1" fill="none" stroke="#3e5a9a" stroke-width="2"/></svg></div></div>
<div class="hsb" style="left:2px;top:495px;width:1145px;height:16px"><div class="sbtn lf" style="left:2px"><svg width="6" height="9" viewBox="0 0 6 9"><path d="M5 1 L1.5 4.5 L5 8" fill="none" stroke="#3e5a9a" stroke-width="2"/></svg></div><div class="hthumb" style="left:18px;width:908px"><i></i></div><div class="sbtn rt" style="left:1129px"><svg width="6" height="9" viewBox="0 0 6 9"><path d="M1 1 L4.5 4.5 L1 8" fill="none" stroke="#3e5a9a" stroke-width="2"/></svg></div></div>
<div class="corner" style="left:1147px;top:495px;width:16px;height:16px"></div>
</div>
<div id="split"></div>
<div id="tabbar2">
<div class="tab tactive b" style="left:8px;width:67px"><svg class="tbg" width="67" height="20" viewBox="0 0 67 20"><path d="M0 19.5 L16 3 Q18 0.5 21 0.5 H63 Q66.5 0.5 66.5 4 V19.5 Z" fill="url(#ga)" stroke="none"/><path d="M0.5 19 L16 3 Q18 0.5 21 0.5 H63 Q66.5 0.5 66.5 4 V19.5" fill="none" stroke="#2a4a8c" stroke-width="1"/></svg><span style="left:20px"><span class=m>IP</span><span class="k">会</span><span class="k">话</span></span></div>
<div class="tab" style="left:75px;width:54px"><svg class="tbg" width="54" height="20" viewBox="0 0 54 20"><path d="M0.5 19.5 V4 Q0.5 0.5 4 0.5 H50 Q53.5 0.5 53.5 4 V19.5" fill="url(#gt)" stroke="#1e3f85" stroke-width="1"/></svg><span style="left:5px"><span class=m>TCP</span><span class="k">会</span><span class="k">话</span></span></div>
<div class="tab" style="left:129px;width:54px"><svg class="tbg" width="54" height="20" viewBox="0 0 54 20"><path d="M0.5 19.5 V4 Q0.5 0.5 4 0.5 H50 Q53.5 0.5 53.5 4 V19.5" fill="url(#gt)" stroke="#1e3f85" stroke-width="1"/></svg><span style="left:5px"><span class=m>UDP</span><span class="k">会</span><span class="k">话</span></span></div>
<svg class="navarr" style="left:1139px" width="8" height="11" viewBox="0 0 8 11"><path d="M6.5 1 L1.5 5.5 L6.5 10 Z" fill="#fff" stroke="#1f3f80" stroke-width="1"/></svg><svg class="navarr" style="left:1153px" width="8" height="11" viewBox="0 0 8 11"><path d="M1.5 1 L6.5 5.5 L1.5 10 Z" fill="#fff" stroke="#1f3f80" stroke-width="1"/></svg>
</div>
<div id="tabline2"></div>
<div id="tb2" class="toolbar">
<div class="tbtn" style="left:8px"><svg width="16" height="16" viewBox="0 0 16 16"><use href="#i-save"/></svg></div>
<div class="tsep" style="left:32px"></div>
<div class="tbtn" style="left:36px"><svg width="16" height="16" viewBox="0 0 16 16"><use href="#i-filter"/></svg></div>
<div class="tsep" style="left:60px"></div>
<div class="tbtn" style="left:64px"><svg width="16" height="16" viewBox="0 0 16 16"><use href="#i-refresh"/></svg></div>
<div class="tdrop" style="left:86px"></div>
<div class="counter" style="left:1010px;width:150px"><b><span class="k">私</span><span class="k">有</span><span class="k">网</span><span class="k">络</span><span class=m>\IP</span><span class="k">会</span><span class="k">话</span>:</b><span class="cv" style="width:30px">458</span></div>
</div>
<div id="g2" class="grid">
<div class="ghead">
<div class="hc" style="left:3px;width:150px"><span><span class="k">节</span><span class="k">点</span>1-></span></div>
<div class="hc" style="left:153px;width:150px"><span><-<span class="k">节</span><span class="k">点</span>2</span></div>
<div class="hc r" style="left:303px;width:100px"><span><span class="k">持</span><span class="k">续</span><span class="k">时</span><span class="k">间</span></span></div>
<div class="hc r" style="left:403px;width:100px"><span><span class="k">字</span><span class="k">节</span></span></div>
<div class="hc r" style="left:503px;width:100px"><span><span class="k">字</span><span class="k">节</span>-></span></div>
<div class="hc r" style="left:603px;width:100px"><span><-<span class="k">字</span><span class="k">节</span></span></div>
<div class="hc r" style="left:703px;width:100px"><span><span class="k">数</span><span class="k">据</span><span class="k">包</span></span></div>
<div class="hc r" style="left:803px;width:100px"><span><span class="k">数</span><span class="k">据</span><span class="k">包</span> -></span></div>
<div class="hc r" style="left:903px;width:100px"><span><- <span class="k">数</span><span class="k">据</span><span class="k">包</span></span></div>
<div class="hc r" style="left:1003px;width:100px"><span><span class="k">开</span><span class="k">始</span><span class="k">发</span><span class="k">包</span><span class="k">时</span><span class="k">间</span></span></div>
<div class="hc r" style="left:1103px;width:100px"><span><span class="k">最</span><span class="k">后</span><span class="k">发</span><span class="k">包</span><span class="k">时</span><span class="k">间</span></span></div>
</div>
<div class="gbody">
<div class="row sel" style="top:0px"><div class="c c0" style="left:3px;width:150px"><svg class="ic" style="left:13px" width="16" height="16" viewBox="0 0 16 16"><use href="#i-pc"/></svg><span class="nm" style="left:32px">192.168.0.100</span></div><div class="c c0" style="left:153px;width:150px"><svg class="ic" style="left:6px" width="16" height="16" viewBox="0 0 16 16"><use href="#i-pcw"/></svg><span class="nm" style="left:27px">125.39.100.79</span></div><div class="c r" style="left:303px;width:100px">2</div><div class="c r" style="left:403px;width:100px">5.572 KB</div><div class="c r" style="left:503px;width:100px">1.096 KB</div><div class="c r" style="left:603px;width:100px">4.477 KB</div><div class="c r" style="left:703px;width:100px">21</div><div class="c r" style="left:803px;width:100px">10</div><div class="c r" style="left:903px;width:100px">11</div><div class="c r" style="left:1003px;width:100px">09:59:44</div></div>
<div class="row" style="top:19px"><div class="c c0" style="left:3px;width:150px"><svg class="ic" style="left:13px" width="16" height="16" viewBox="0 0 16 16"><use href="#i-pc"/></svg><span class="nm" style="left:32px">192.168.0.100</span></div><div class="c c0" style="left:153px;width:150px"><svg class="ic" style="left:6px" width="16" height="16" viewBox="0 0 16 16"><use href="#i-pcw"/></svg><span class="nm" style="left:27px">221.209.11.74</span></div><div class="c r" style="left:303px;width:100px">8</div><div class="c r" style="left:403px;width:100px">248  B</div><div class="c r" style="left:503px;width:100px">248  B</div><div class="c r" style="left:603px;width:100px">0  B</div><div class="c r" style="left:703px;width:100px">4</div><div class="c r" style="left:803px;width:100px">4</div><div class="c r" style="left:903px;width:100px">0</div><div class="c r" style="left:1003px;width:100px">09:59:54</div></div>
<div class="row" style="top:38px"><div class="c c0" style="left:3px;width:150px"><svg class="ic" style="left:13px" width="16" height="16" viewBox="0 0 16 16"><use href="#i-pc"/></svg><span class="nm" style="left:32px">192.168.0.100</span></div><div class="c c0" style="left:153px;width:150px"><svg class="ic" style="left:6px" width="16" height="16" viewBox="0 0 16 16"><use href="#i-pcw"/></svg><span class="nm" style="left:27px">17.254.2.186</span></div><div class="c r" style="left:303px;width:100px">0</div><div class="c r" style="left:403px;width:100px">1.681 KB</div><div class="c r" style="left:503px;width:100px">1.072 KB</div><div class="c r" style="left:603px;width:100px">623  B</div><div class="c r" style="left:703px;width:100px">10</div><div class="c r" style="left:803px;width:100px">5</div><div class="c r" style="left:903px;width:100px">5</div><div class="c r" style="left:1003px;width:100px">10:00:27</div></div>
<div class="row" style="top:57px"><div class="c c0" style="left:3px;width:150px"><svg class="ic" style="left:13px" width="16" height="16" viewBox="0 0 16 16"><use href="#i-pc"/></svg><span class="nm" style="left:32px">192.168.0.100</span></div><div class="c c0" style="left:153px;width:150px"><svg class="ic" style="left:6px" width="16" height="16" viewBox="0 0 16 16"><use href="#i-pcw"/></svg><span class="nm" style="left:27px">203.90.136.131</span></div><div class="c r" style="left:303px;width:100px">8</div><div class="c r" style="left:403px;width:100px">248  B</div><div class="c r" style="left:503px;width:100px">248  B</div><div class="c r" style="left:603px;width:100px">0  B</div><div class="c r" style="left:703px;width:100px">4</div><div class="c r" style="left:803px;width:100px">4</div><div class="c r" style="left:903px;width:100px">0</div><div class="c r" style="left:1003px;width:100px">10:00:25</div></div>
<div class="row" style="top:76px"><div class="c c0" style="left:3px;width:150px"><svg class="ic" style="left:13px" width="16" height="16" viewBox="0 0 16 16"><use href="#i-pc"/></svg><span class="nm" style="left:32px">192.168.0.100</span></div><div class="c c0" style="left:153px;width:150px"><svg class="ic" style="left:6px" width="16" height="16" viewBox="0 0 16 16"><use href="#i-pcw"/></svg><span class="nm" style="left:27px">218.8.242.139</span></div><div class="c r" style="left:303px;width:100px">21</div><div class="c r" style="left:403px;width:100px">1.053 KB</div><div class="c r" style="left:503px;width:100px">384  B</div><div class="c r" style="left:603px;width:100px">694  B</div><div class="c r" style="left:703px;width:100px">16</div><div class="c r" style="left:803px;width:100px">6</div><div class="c r" style="left:903px;width:100px">10</div><div class="c r" style="left:1003px;width:100px">10:00:48</div></div>
<div class="row" style="top:95px"><div class="c c0" style="left:3px;width:150px"><svg class="ic" style="left:13px" width="16" height="16" viewBox="0 0 16 16"><use href="#i-pc"/></svg><span class="nm" style="left:32px">192.168.0.100</span></div><div class="c c0" style="left:153px;width:150px"><svg class="ic" style="left:6px" width="16" height="16" viewBox="0 0 16 16"><use href="#i-pcw"/></svg><span class="nm" style="left:27px">60.28.234.161</span></div><div class="c r" style="left:303px;width:100px">01:28</div><div class="c r" style="left:403px;width:100px">193.185 KB</div><div class="c r" style="left:503px;width:100px">29.076 KB</div><div class="c r" style="left:603px;width:100px">164.108 KB</div><div class="c r" style="left:703px;width:100px">293</div><div class="c r" style="left:803px;width:100px">130</div><div class="c r" style="left:903px;width:100px">163</div><div class="c r" style="left:1003px;width:100px">09:59:47</div></div>
<div class="row" style="top:114px"><div class="c c0" style="left:3px;width:150px"><svg class="ic" style="left:13px" width="16" height="16" viewBox="0 0 16 16"><use href="#i-pc"/></svg><span class="nm" style="left:32px">192.168.0.100</span></div><div class="c c0" style="left:153px;width:150px"><svg class="ic" style="left:6px" width="16" height="16" viewBox="0 0 16 16"><use href="#i-pcw"/></svg><span class="nm" style="left:27px">117.14.150.83</span></div><div class="c r" style="left:303px;width:100px">01:30</div><div class="c r" style="left:403px;width:100px">440  B</div><div class="c r" style="left:503px;width:100px">248  B</div><div class="c r" style="left:603px;width:100px">192  B</div><div class="c r" style="left:703px;width:100px">7</div><div class="c r" style="left:803px;width:100px">4</div><div class="c r" style="left:903px;width:100px">3</div><div class="c r" style="left:1003px;width:100px">09:59:54</div></div>
<div class="row" style="top:133px"><div class="c c0" style="left:3px;width:150px"><svg class="ic" style="left:13px" width="16" height="16" viewBox="0 0 16 16"><use href="#i-pc"/></svg><span class="nm" style="left:32px">192.168.0.100</span></div><div class="c c0" style="left:153px;width:150px"><svg class="ic" style="left:6px" width="16" height="16" viewBox="0 0 16 16"><use href="#i-pcw"/></svg><span class="nm" style="left:27px">113.6.254.51</span></div><div class="c r" style="left:303px;width:100px">46</div><div class="c r" style="left:403px;width:100px">1.422 KB</div><div class="c r" style="left:503px;width:100px">628  B</div><div class="c r" style="left:603px;width:100px">828  B</div><div class="c r" style="left:703px;width:100px">22</div><div class="c r" style="left:803px;width:100px">10</div><div class="c r" style="left:903px;width:100px">12</div><div class="c r" style="left:1003px;width:100px">10:00:41</div></div>
<div class="row" style="top:152px"><div class="c c0" style="left:3px;width:150px"><svg class="ic" style="left:13px" width="16" height="16" viewBox="0 0 16 16"><use href="#i-pc"/></svg><span class="nm" style="left:32px">192.168.0.100</span></div><div class="c c0" style="left:153px;width:150px"><svg class="ic" style="left:6px" width="16" height="16" viewBox="0 0 16 16"><use href="#i-pcw"/></svg><span class="nm" style="left:27px">120.29.145.18</span></div><div class="c r" style="left:303px;width:100px">01:04</div><div class="c r" style="left:403px;width:100px">8.899 KB</div><div class="c r" style="left:503px;width:100px">1.211 KB</div><div class="c r" style="left:603px;width:100px">7.688 KB</div><div class="c r" style="left:703px;width:100px">21</div><div class="c r" style="left:803px;width:100px">11</div><div class="c r" style="left:903px;width:100px">10</div><div class="c r" style="left:1003px;width:100px">10:00:27</div></div>
<div class="row" style="top:171px"><div class="c c0" style="left:3px;width:150px"><svg class="ic" style="left:13px" width="16" height="16" viewBox="0 0 16 16"><use href="#i-pcw"/></svg><span class="nm" style="left:32px">221.207.180.183</span></div><div class="c c0" style="left:153px;width:150px"><svg class="ic" style="left:6px" width="16" height="16" viewBox="0 0 16 16"><use href="#i-pc"/></svg><span class="nm" style="left:27px">192.168.0.100</span></div><div class="c r" style="left:303px;width:100px">02:00</div><div class="c r" style="left:403px;width:100px">438  B</div><div class="c r" style="left:503px;width:100px">128  B</div><div class="c r" style="left:603px;width:100px">310  B</div><div class="c r" style="left:703px;width:100px">7</div><div class="c r" style="left:803px;width:100px">2</div><div class="c r" style="left:903px;width:100px">5</div><div class="c r" style="left:1003px;width:100px">09:59:52</div></div>
<div class="row" style="top:190px"><div class="c c0" style="left:3px;width:150px"><svg class="ic" style="left:13px" width="16" height="16" viewBox="0 0 16 16"><use href="#i-pc"/></svg></div><div class="c c0" style="left:153px;width:150px"><svg class="ic" style="left:6px" width="16" height="16" viewBox="0 0 16 16"><use href="#i-pc"/></svg></div></div>
</div>
<i class="cl" style="left:153px"></i><i class="cl" style="left:303px"></i><i class="cl" style="left:403px"></i><i class="cl" style="left:503px"></i><i class="cl" style="left:603px"></i><i class="cl" style="left:703px"></i><i class="cl" style="left:803px"></i><i class="cl" style="left:903px"></i><i class="cl" style="left:1003px"></i><i class="cl" style="left:1103px"></i>
<div class="vsb" style="left:1145px;top:0;width:18px;height:213px"><div class="sbtn up" style="top:1px"><svg width="9" height="6" viewBox="0 0 9 6"><path d="M1 5 L4.5 1.5 L8 5" fill="none" stroke="#3e5a9a" stroke-width="2"/></svg></div><div class="vthumb" style="top:17px;height:9px"></div><div class="sbtn dn" style="bottom:1px"><svg width="9" height="6" viewBox="0 0 9 6"><path d="M1 1 L4.5 4.5 L8 1" fill="none" stroke="#3e5a9a" stroke-width="2"/></svg></div></div>
<div class="hsb" style="left:3px;top:213px;width:1142px;height:16px"><div class="sbtn lf" style="left:2px"><svg width="6" height="9" viewBox="0 0 6 9"><path d="M5 1 L1.5 4.5 L5 8" fill="none" stroke="#3e5a9a" stroke-width="2"/></svg></div><div class="hthumb" style="left:18px;width:1052px"><i></i></div><div class="sbtn rt" style="left:1126px"><svg width="6" height="9" viewBox="0 0 6 9"><path d="M1 1 L4.5 4.5 L1 8" fill="none" stroke="#3e5a9a" stroke-width="2"/></svg></div></div>
<div class="corner" style="left:1145px;top:213px;width:18px;height:16px"></div>
</div>
<div id="frameL1"></div><div id="frameL2"></div><div id="frameR"></div><div id="frameR0"></div><div id="frameR2"></div><div id="frameB"></div>
</div>
</body></html>
